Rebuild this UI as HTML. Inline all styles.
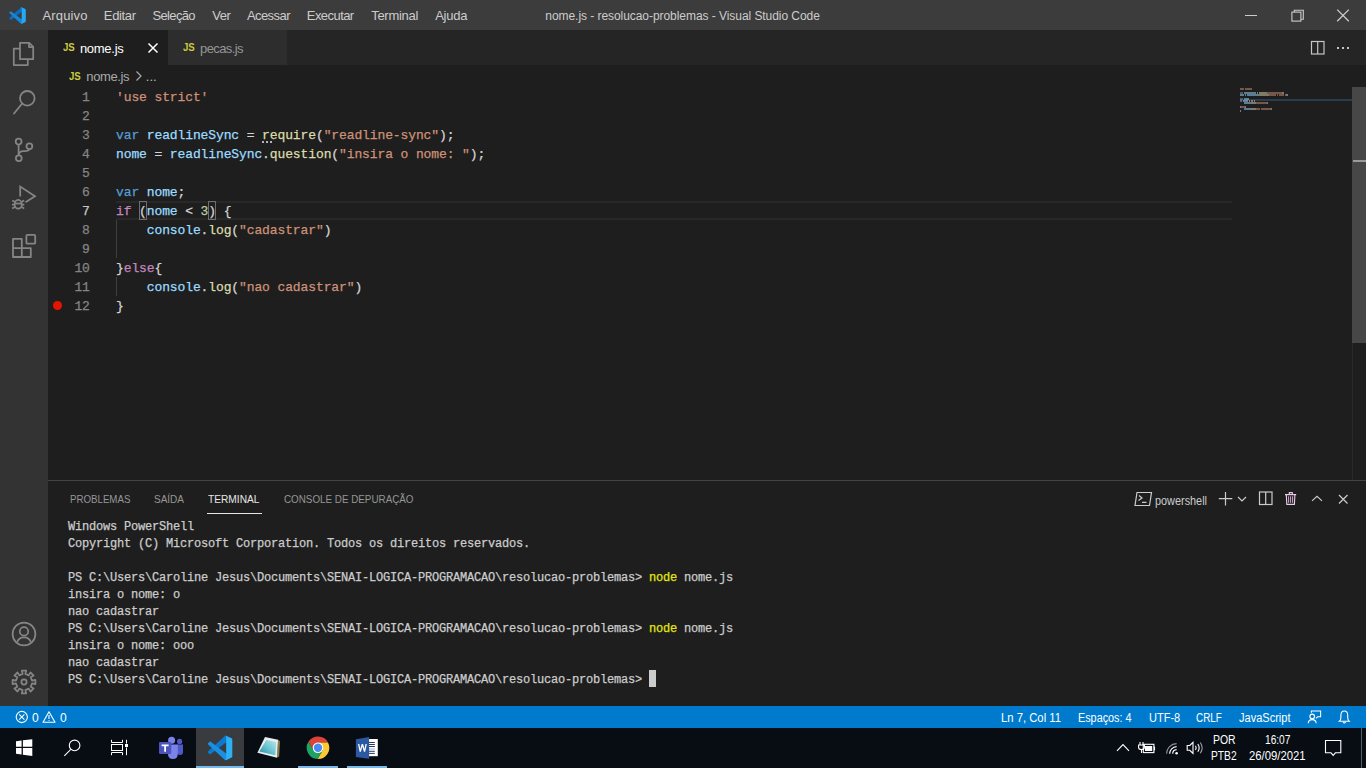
<!DOCTYPE html>
<html><head><meta charset="utf-8"><style>
html,body{margin:0;padding:0;}
body{width:1366px;height:768px;overflow:hidden;position:relative;background:#1e1e1e;font-family:'Liberation Sans', sans-serif;}
.t{position:absolute;white-space:pre;line-height:1;}
svg{position:absolute;overflow:visible;}
</style></head><body>
<div style="position:absolute;left:0px;top:0px;width:1366px;height:30px;background:#3c3c3c;"></div>
<div style="position:absolute;left:0px;top:30px;width:48px;height:676px;background:#333333;"></div>
<div style="position:absolute;left:48px;top:30px;width:1318px;height:35px;background:#252526;"></div>
<div style="position:absolute;left:48px;top:30px;width:120px;height:35px;background:#1e1e1e;"></div>
<div style="position:absolute;left:168px;top:30px;width:119px;height:35px;background:#2d2d2d;"></div>
<div style="position:absolute;left:48px;top:480px;width:1318px;height:1px;background:#444444;"></div>
<div style="position:absolute;left:0px;top:706px;width:1366px;height:22px;background:#007acc;"></div>
<div style="position:absolute;left:0px;top:728px;width:1366px;height:40px;background:#080d14;"></div>
<div style="position:absolute;left:649px;top:670px;width:7px;height:17px;background:#cccccc;"></div>
<div style="position:absolute;left:207px;top:513px;width:55px;height:1px;background:#e7e7e7;"></div>
<div style="position:absolute;left:116px;top:201px;width:1116px;height:2px;background:#282828;"></div>
<div style="position:absolute;left:116px;top:218px;width:1116px;height:2px;background:#282828;"></div>
<div style="position:absolute;left:139px;top:201px;width:6px;height:17px;border:1px solid #6e6e6e;box-sizing:content-box"></div>
<div style="position:absolute;left:208px;top:201px;width:6px;height:17px;border:1px solid #6e6e6e;box-sizing:content-box"></div>
<div style="position:absolute;left:116px;top:220px;width:1px;height:38px;background:#404040;"></div>
<div style="position:absolute;left:116px;top:277px;width:1px;height:19px;background:#404040;"></div>
<div style="position:absolute;left:53px;top:301px;width:9px;height:9px;border-radius:50%;background:#e51400"></div>
<div style="position:absolute;left:262px;top:141px;width:2px;height:2px;background:#b4b4b4;"></div>
<div style="position:absolute;left:266px;top:141px;width:2px;height:2px;background:#b4b4b4;"></div>
<div style="position:absolute;left:270px;top:141px;width:2px;height:2px;background:#b4b4b4;"></div>
<div style="position:absolute;left:1352px;top:87px;width:14px;height:256px;background:#474747;"></div>
<div style="position:absolute;left:1352px;top:343px;width:1px;height:137px;background:#2a2a2a;"></div>
<div style="position:absolute;left:1353px;top:160px;width:13px;height:2px;background:#9a9a9a;"></div>
<div style="position:absolute;left:1240px;top:99px;width:112px;height:2px;background:#2a3c4e;"></div>
<div style="position:absolute;left:1240px;top:88px;width:4px;height:2px;background:#ce9178;opacity:.5"></div>
<div style="position:absolute;left:1245px;top:88px;width:7px;height:2px;background:#ce9178;opacity:.5"></div>
<div style="position:absolute;left:1240px;top:92px;width:3px;height:2px;background:#569cd6;opacity:.5"></div>
<div style="position:absolute;left:1244px;top:92px;width:12px;height:2px;background:#9cdcfe;opacity:.5"></div>
<div style="position:absolute;left:1257px;top:92px;width:1px;height:2px;background:#d4d4d4;opacity:.5"></div>
<div style="position:absolute;left:1259px;top:92px;width:7px;height:2px;background:#dcdcaa;opacity:.5"></div>
<div style="position:absolute;left:1266px;top:92px;width:1px;height:2px;background:#d4d4d4;opacity:.5"></div>
<div style="position:absolute;left:1267px;top:92px;width:15px;height:2px;background:#ce9178;opacity:.5"></div>
<div style="position:absolute;left:1282px;top:92px;width:2px;height:2px;background:#d4d4d4;opacity:.5"></div>
<div style="position:absolute;left:1240px;top:94px;width:4px;height:2px;background:#9cdcfe;opacity:.5"></div>
<div style="position:absolute;left:1245px;top:94px;width:1px;height:2px;background:#d4d4d4;opacity:.5"></div>
<div style="position:absolute;left:1247px;top:94px;width:12px;height:2px;background:#9cdcfe;opacity:.5"></div>
<div style="position:absolute;left:1259px;top:94px;width:1px;height:2px;background:#d4d4d4;opacity:.5"></div>
<div style="position:absolute;left:1260px;top:94px;width:8px;height:2px;background:#dcdcaa;opacity:.5"></div>
<div style="position:absolute;left:1268px;top:94px;width:1px;height:2px;background:#d4d4d4;opacity:.5"></div>
<div style="position:absolute;left:1269px;top:94px;width:7px;height:2px;background:#ce9178;opacity:.5"></div>
<div style="position:absolute;left:1277px;top:94px;width:1px;height:2px;background:#ce9178;opacity:.5"></div>
<div style="position:absolute;left:1279px;top:94px;width:5px;height:2px;background:#ce9178;opacity:.5"></div>
<div style="position:absolute;left:1285px;top:94px;width:1px;height:2px;background:#ce9178;opacity:.5"></div>
<div style="position:absolute;left:1286px;top:94px;width:2px;height:2px;background:#d4d4d4;opacity:.5"></div>
<div style="position:absolute;left:1240px;top:98px;width:3px;height:2px;background:#569cd6;opacity:.5"></div>
<div style="position:absolute;left:1244px;top:98px;width:4px;height:2px;background:#9cdcfe;opacity:.5"></div>
<div style="position:absolute;left:1248px;top:98px;width:1px;height:2px;background:#d4d4d4;opacity:.5"></div>
<div style="position:absolute;left:1240px;top:100px;width:2px;height:2px;background:#c586c0;opacity:.5"></div>
<div style="position:absolute;left:1243px;top:100px;width:1px;height:2px;background:#d4d4d4;opacity:.5"></div>
<div style="position:absolute;left:1244px;top:100px;width:4px;height:2px;background:#9cdcfe;opacity:.5"></div>
<div style="position:absolute;left:1249px;top:100px;width:1px;height:2px;background:#d4d4d4;opacity:.5"></div>
<div style="position:absolute;left:1251px;top:100px;width:1px;height:2px;background:#b5cea8;opacity:.5"></div>
<div style="position:absolute;left:1252px;top:100px;width:1px;height:2px;background:#d4d4d4;opacity:.5"></div>
<div style="position:absolute;left:1254px;top:100px;width:1px;height:2px;background:#d4d4d4;opacity:.5"></div>
<div style="position:absolute;left:1244px;top:102px;width:7px;height:2px;background:#9cdcfe;opacity:.5"></div>
<div style="position:absolute;left:1251px;top:102px;width:1px;height:2px;background:#d4d4d4;opacity:.5"></div>
<div style="position:absolute;left:1252px;top:102px;width:3px;height:2px;background:#dcdcaa;opacity:.5"></div>
<div style="position:absolute;left:1255px;top:102px;width:1px;height:2px;background:#d4d4d4;opacity:.5"></div>
<div style="position:absolute;left:1256px;top:102px;width:11px;height:2px;background:#ce9178;opacity:.5"></div>
<div style="position:absolute;left:1267px;top:102px;width:1px;height:2px;background:#d4d4d4;opacity:.5"></div>
<div style="position:absolute;left:1240px;top:106px;width:1px;height:2px;background:#d4d4d4;opacity:.5"></div>
<div style="position:absolute;left:1241px;top:106px;width:4px;height:2px;background:#c586c0;opacity:.5"></div>
<div style="position:absolute;left:1245px;top:106px;width:1px;height:2px;background:#d4d4d4;opacity:.5"></div>
<div style="position:absolute;left:1244px;top:108px;width:7px;height:2px;background:#9cdcfe;opacity:.5"></div>
<div style="position:absolute;left:1251px;top:108px;width:1px;height:2px;background:#d4d4d4;opacity:.5"></div>
<div style="position:absolute;left:1252px;top:108px;width:3px;height:2px;background:#dcdcaa;opacity:.5"></div>
<div style="position:absolute;left:1255px;top:108px;width:1px;height:2px;background:#d4d4d4;opacity:.5"></div>
<div style="position:absolute;left:1256px;top:108px;width:4px;height:2px;background:#ce9178;opacity:.5"></div>
<div style="position:absolute;left:1261px;top:108px;width:10px;height:2px;background:#ce9178;opacity:.5"></div>
<div style="position:absolute;left:1271px;top:108px;width:1px;height:2px;background:#d4d4d4;opacity:.5"></div>
<div style="position:absolute;left:1240px;top:110px;width:1px;height:2px;background:#d4d4d4;opacity:.5"></div>
<svg style="left:0px;top:30px;" width="48" height="48" viewBox="0 0 48 48"><g fill="none" stroke="#858585" stroke-width="1.75" stroke-linejoin="round"><path d="M19.8 18.5 H13.8 V35 H27.8 V30"/><path d="M20 12.8 H29.2 L33.2 16.8 V29.2 H20 Z"/><path d="M29 13 V17 H33"/></g></svg>
<svg style="left:0px;top:78px;" width="48" height="48" viewBox="0 0 48 48"><g fill="none" stroke="#858585" stroke-width="1.8"><circle cx="27.3" cy="20.3" r="7.3"/><path d="M22 25.8 L14 35.5" stroke-linecap="round"/></g></svg>
<svg style="left:0px;top:126px;" width="48" height="48" viewBox="0 0 48 48"><g fill="none" stroke="#858585" stroke-width="1.75"><circle cx="18.6" cy="15.6" r="2.9"/><circle cx="29.4" cy="20.2" r="2.9"/><circle cx="18.8" cy="32.2" r="2.9"/><path d="M18.6 18.5 V29.3"/><path d="M18.8 28.5 Q19.5 25 23 25 H25.5 Q29.4 25 29.4 23.1"/></g></svg>
<svg style="left:0px;top:174px;" width="48" height="48" viewBox="0 0 48 48"><g fill="none" stroke="#858585" stroke-width="1.75" stroke-linejoin="miter"><path d="M20.2 22.5 V12.5 L35 22.2 L25.5 28.3"/><ellipse cx="18.2" cy="30.3" rx="3.6" ry="4.4"/><path d="M14.6 29.5 H21.8"/><path d="M12.2 26.5 L14.8 27.8 M24.2 26.5 L21.6 27.8 M12 30.5 H14.5 M24.3 30.5 H21.8 M12.2 34.5 L14.8 33 M24.2 34.5 L21.6 33"/></g></svg>
<svg style="left:0px;top:222px;" width="48" height="48" viewBox="0 0 48 48"><g fill="none" stroke="#858585" stroke-width="1.8" stroke-linejoin="round"><path d="M13 16.9 H21.8 V26.2 H30.8 V35 H13 Z"/><path d="M13 26.2 H21.8 V35"/><rect x="26.4" y="12.9" width="8.8" height="8.8" rx="1"/></g></svg>
<svg style="left:0px;top:610px;" width="48" height="48" viewBox="0 0 48 48"><g fill="none" stroke="#858585" stroke-width="1.75"><circle cx="24" cy="24" r="11.4"/><circle cx="24" cy="21.4" r="4.2"/><path d="M17 32.6 Q18.5 27.4 24 27.4 Q29.5 27.4 31 32.6"/></g></svg>
<svg style="left:0px;top:658px;" width="48" height="48" viewBox="0 0 48 48"><g fill="none" stroke="#858585" stroke-width="1.75" stroke-linejoin="round"><path d="M35.39 21.79 L35.39 26.21 L32.09 25.35 L30.68 28.76 L33.62 30.49 L30.49 33.62 L28.76 30.68 L25.35 32.09 L26.21 35.39 L21.79 35.39 L22.65 32.09 L19.24 30.68 L17.51 33.62 L14.38 30.49 L17.32 28.76 L15.91 25.35 L12.61 26.21 L12.61 21.79 L15.91 22.65 L17.32 19.24 L14.38 17.51 L17.51 14.38 L19.24 17.32 L22.65 15.91 L21.79 12.61 L26.21 12.61 L25.35 15.91 L28.76 17.32 L30.49 14.38 L33.62 17.51 L30.68 19.24 L32.09 22.65 Z"/><circle cx="24" cy="24" r="2.6"/></g></svg>
<svg style="left:9px;top:7px;" width="17" height="17" viewBox="0 0 17 17"><g transform="translate(0.3 0.3) scale(0.165)"><path fill="#0a6fc0" d="M96.46 10.8L75.86 0.88C73.47 -0.27 70.62 0.21 68.75 2.08L1.3 63.58C-0.52 65.24 -0.51 68.09 1.3 69.75L6.81 74.75C8.3 76.1 10.53 76.2 12.13 74.99L93.36 13.37C96.09 11.3 100 13.25 100 16.67V16.43C100 14.03 98.62 11.84 96.46 10.8Z"/><path fill="#1586d8" d="M96.46 89.2L75.86 99.12C73.47 100.27 70.62 99.79 68.75 97.92L1.3 36.42C-0.52 34.76 -0.51 31.91 1.3 30.25L6.81 25.25C8.3 23.9 10.53 23.8 12.13 25.01L93.36 86.63C96.09 88.7 100 86.75 100 83.33V83.57C100 85.97 98.62 88.16 96.46 89.2Z"/><path fill="#28a8f2" d="M75.86 99.13C73.47 100.27 70.62 99.79 68.75 97.92C71.06 100.22 75 98.59 75 95.33V4.67C75 1.41 71.06 -0.22 68.75 2.08C70.62 0.21 73.47 -0.27 75.86 0.87L96.46 10.78C98.62 11.82 100 14.01 100 16.41V83.59C100 85.99 98.62 88.18 96.46 89.22L75.86 99.13Z"/></g></svg>
<div style="position:absolute;left:1245px;top:15px;width:12px;height:1px;background:#cccccc;"></div>
<svg style="left:1236px;top:4px;" width="120" height="24" viewBox="0 0 120 24"><g fill="none" stroke="#cccccc" stroke-width="1.1"><rect x="55.9" y="8.1" width="9" height="9"/><path d="M58.3 8.1 V6.2 H67.3 V15.2 H64.9"/><path d="M101.2 5.6 L112.8 17.2 M112.8 5.6 L101.2 17.2" stroke-width="1.3"/></g></svg>
<svg style="left:140px;top:36px;" width="26" height="24" viewBox="0 0 26 24"><g fill="none" stroke="#ffffff" stroke-width="1.5"><path d="M8.5 7.5 L17.5 16.5 M17.5 7.5 L8.5 16.5"/></g></svg>
<svg style="left:130px;top:66px;" width="20" height="20" viewBox="0 0 20 20"><path d="M6.5 5.5 L11 10 L6.5 14.5" fill="none" stroke="#a9a9a9" stroke-width="1.2"/></svg>
<svg style="left:1305px;top:36px;" width="26" height="24" viewBox="0 0 26 24"><g fill="none" stroke="#c5c5c5" stroke-width="1.2"><rect x="6.5" y="5.5" width="12.5" height="12.5"/><path d="M12.7 5.5 V18"/></g></svg>
<div style="position:absolute;left:1337px;top:47px;width:2px;height:2px;background:#c5c5c5;"></div>
<div style="position:absolute;left:1342px;top:47px;width:2px;height:2px;background:#c5c5c5;"></div>
<div style="position:absolute;left:1347px;top:47px;width:2px;height:2px;background:#c5c5c5;"></div>
<svg style="left:1130px;top:486px;" width="130" height="26" viewBox="0 0 130 26"><g fill="none" stroke="#cccccc" stroke-width="1.2"><path d="M7 6.5 H21.5 L19.5 19.5 H5 Z"/><path d="M9 9.5 L12 12 L8.5 14.5 M12 16.3 H16.5"/><path d="M95.5 6 V19.5 M88.8 12.7 H102.3"/><path d="M108 11 L112 15 L116 11"/></g></svg>
<svg style="left:1250px;top:486px;" width="110" height="26" viewBox="0 0 110 26"><g fill="none" stroke="#cccccc" stroke-width="1.2"><rect x="9.5" y="6" width="12.5" height="12.5"/><path d="M15.7 6 V18.5"/><path d="M62 10.5 L67 15 L72 10.5" transform="rotate(180 67 12.7)"/><path d="M89 9 L97.5 17.5 M97.5 9 L89 17.5"/></g></svg>
<svg style="left:1280px;top:486px;" width="24" height="26" viewBox="0 0 24 26"><g fill="none" stroke="#e6cfe6" stroke-width="1.1"><path d="M5 8.6 H16.2 M9.3 8.6 V6.6 H12.3 V8.6 M6.3 8.6 L6.8 18.4 H14.4 L14.9 8.6"/><path d="M8.6 10.3 V16.8 M10.6 10.3 V16.8 M12.6 10.3 V16.8" stroke="#d9a6d9" stroke-width="1"/></g></svg>
<svg style="left:14px;top:710px;" width="60" height="16" viewBox="0 0 60 16"><g fill="none" stroke="#ffffff" stroke-width="1.1"><circle cx="7.8" cy="7" r="5.6"/><path d="M5.2 4.4 L10.4 9.6 M10.4 4.4 L5.2 9.6"/><path d="M35 1.8 L41 12.3 H29 Z" stroke-linejoin="round"/><path d="M35 5 V9 M35 10.2 V11"/></g></svg>
<svg style="left:1300px;top:708px;" width="60" height="18" viewBox="0 0 60 18"><g fill="none" stroke="#ffffff" stroke-width="1.1"><path d="M11.4 4.8 V3 H20.6 V8.8 H17.6 L15.9 10.4"/><circle cx="12.2" cy="8.4" r="2.3"/><path d="M8.2 15.2 Q8.6 11.6 12.2 11.6 Q15.8 11.6 16.2 15.2"/><path d="M39.4 13.2 Q40.9 11.9 40.9 9.5 V7.2 Q40.9 3 44.3 3 Q47.7 3 47.7 7.2 V9.5 Q47.7 11.9 49.2 13.2 Z"/><path d="M42.9 14.3 Q44.3 15.6 45.7 14.3"/></g></svg>
<div style="position:absolute;left:196px;top:728px;width:48px;height:40px;background:#3a3b3e;"></div>
<div style="position:absolute;left:196px;top:766px;width:48px;height:2px;background:#76b9ed;"></div>
<div style="position:absolute;left:298px;top:766px;width:40px;height:2px;background:#76b9ed;"></div>
<div style="position:absolute;left:347px;top:766px;width:40px;height:2px;background:#76b9ed;"></div>
<div style="position:absolute;left:1361px;top:728px;width:1px;height:40px;background:#5a5d62;"></div>
<svg style="left:14px;top:738px;" width="20" height="20" viewBox="0 0 20 20"><g fill="#ffffff"><path d="M2 3.3 L7.6 2.5 V8.8 H2 Z"/><path d="M8.9 2.3 L18.3 1.2 V8.8 H8.9 Z"/><path d="M2 10.1 H7.6 V16.5 L2 15.7 Z"/><path d="M8.9 10.1 H18.3 V17.9 L8.9 16.7 Z"/></g></svg>
<svg style="left:60px;top:736px;" width="24" height="24" viewBox="0 0 24 24"><g fill="none" stroke="#ffffff" stroke-width="1.1"><circle cx="14.6" cy="9.4" r="5.3"/><path d="M10.8 13.4 L4.3 19.8"/></g></svg>
<svg style="left:108px;top:736px;" width="24" height="24" viewBox="0 0 24 24"><g fill="none" stroke="#ffffff" stroke-width="1"><path d="M3.5 3.8 V6.5 H14.5 V3.8 M3.5 19.2 V16.5 H14.5 V19.2"/><rect x="3.5" y="8.5" width="11" height="6"/><path d="M18.5 3.8 V7.5 M18.5 11.5 V19.2"/></g></svg>
<div style="position:absolute;left:125px;top:744px;width:3px;height:3px;background:#ffffff;"></div>
<svg style="left:156px;top:734px;" width="30" height="26" viewBox="0 0 30 26"><g><circle cx="15.6" cy="6.2" r="3.5" fill="#7b83eb"/><circle cx="23.6" cy="7.4" r="2.6" fill="#5059c9"/><path d="M21 10.6 H27 V17.5 Q27 21 24 21 Q21.5 21 21 19 Z" fill="#5059c9"/><path d="M12 10.6 H21.8 V20 Q21.8 25 16.9 25 Q12 25 12 20 Z" fill="#7b83eb"/><rect x="3" y="8" width="12.2" height="11.9" rx="0.8" fill="#4b53bc"/><path d="M5.6 10.5 H12.6 V12.3 H10 V17.8 H8.2 V12.3 H5.6 Z" fill="#ffffff"/></g></svg>
<svg style="left:207px;top:735px;" width="26" height="26" viewBox="0 0 26 26"><g transform="translate(0.8 0.7) scale(0.245)"><path fill="#0a7ad0" d="M96.46 10.8L75.86 0.88C73.47 -0.27 70.62 0.21 68.75 2.08L1.3 63.58C-0.52 65.24 -0.51 68.09 1.3 69.75L6.81 74.75C8.3 76.1 10.53 76.2 12.13 74.99L93.36 13.37C96.09 11.3 100 13.25 100 16.67V16.43C100 14.03 98.62 11.84 96.46 10.8Z"/><path fill="#1a8fe3" d="M96.46 89.2L75.86 99.12C73.47 100.27 70.62 99.79 68.75 97.92L1.3 36.42C-0.52 34.76 -0.51 31.91 1.3 30.25L6.81 25.25C8.3 23.9 10.53 23.8 12.13 25.01L93.36 86.63C96.09 88.7 100 86.75 100 83.33V83.57C100 85.97 98.62 88.16 96.46 89.2Z"/><path fill="#2cb1f7" d="M75.86 99.13C73.47 100.27 70.62 99.79 68.75 97.92C71.06 100.22 75 98.59 75 95.33V4.67C75 1.41 71.06 -0.22 68.75 2.08C70.62 0.21 73.47 -0.27 75.86 0.87L96.46 10.78C98.62 11.82 100 14.01 100 16.41V83.59C100 85.99 98.62 88.18 96.46 89.22L75.86 99.13Z"/></g></svg>
<svg style="left:255px;top:735px;" width="26" height="26" viewBox="0 0 26 26"><defs><linearGradient id="np" x1="0" y1="1" x2="1" y2="0"><stop offset="0" stop-color="#1f8a99"/><stop offset=".5" stop-color="#6cc4d2"/><stop offset="1" stop-color="#bfe6ee"/></linearGradient></defs><g><path d="M23.1 4.8 L25 6.2 L24.2 21.5 L22 22.8 Z" fill="#8a7a4a"/><path d="M10 2.1 L23.1 4.8 L22 22.8 L2.4 17.7 Z" fill="#e6eef0"/><path d="M11.3 5 L21.2 7 L20.3 20.2 L4.3 16.4 Z" fill="url(#np)"/></g></svg>
<svg style="left:306px;top:736px;" width="24" height="24" viewBox="0 0 24 24"><g transform="translate(12 11.7)"><path d="M0 -5.3 L9.98 -5.3 A11.3 11.3 0 0 0 -9.58 -5.99 L-4.59 2.65 L0 0 Z" fill="#db4437"/><path d="M0 -5.3 L9.98 -5.3 A11.3 11.3 0 0 1 -0.4 11.3 L4.59 2.65 L0 0 Z" fill="#fcc934"/><path d="M4.59 2.65 L-0.4 11.3 A11.3 11.3 0 0 1 -9.58 -5.99 L-4.59 2.65 L0 0 Z" fill="#1ea362"/><circle r="5.3" fill="#ffffff"/><circle r="4.2" fill="#4a8af4"/></g></svg>
<svg style="left:354px;top:735px;" width="26" height="26" viewBox="0 0 26 26"><g><rect x="14.5" y="4" width="9.3" height="17.2" fill="#ffffff"/><path d="M15 7.5 H20.8 M15 9.5 H20.8 M15 11.5 H20.8 M15 16.3 H20.8 M15 18.4 H20.8" stroke="#2a3a5c" stroke-width="1"/><path d="M15 14 H20.8" stroke="#9fb2d6" stroke-width="1"/><path d="M1.9 4.2 L15.1 1.9 V23.8 L1.9 22 Z" fill="#2c58a2"/><path d="M4 9.1 L5.6 16.7 L6.9 16.7 L8.4 11.6 L9.9 16.7 L11.2 16.7 L12.8 9.1 L11.5 9.1 L10.5 14 L9.1 9.1 L7.7 9.1 L6.3 14 L5.3 9.1 Z" fill="#ffffff"/></g></svg>
<svg style="left:1110px;top:736px;" width="100" height="24" viewBox="0 0 100 24"><g fill="none" stroke="#ffffff" stroke-width="1.1"><path d="M7 14.8 L13 8.6 L19 14.8"/><path d="M30 6 V9 M33 6 V9 M28.6 9 H34.4 V11.5 Q34.4 13.5 31.5 13.5 Q28.6 13.5 28.6 11.5 Z M31.5 13.5 V17"/><rect x="33.3" y="8.3" width="10.6" height="8.3"/><path d="M44.5 10.5 V14.3"/></g><rect x="35" y="10" width="7.2" height="5" fill="#ffffff"/><g fill="none" stroke="#ffffff" stroke-width="1.1"><path d="M62.7 17.8 A4.2 4.2 0 0 1 66.6 13.6 M59.6 17.8 A7.2 7.2 0 0 1 66.6 10.6"/><path d="M56.6 17.8 A10.2 10.2 0 0 1 66.6 7.6" stroke-opacity=".55"/><path d="M77.2 9.5 H79.8 L83 6.3 V17.5 L79.8 14.3 H77.2 Z"/><path d="M85.5 9.8 Q86.8 11.9 85.5 14"/><path d="M87.8 8 Q90.5 11.9 87.8 15.8"/><path d="M90.3 6.5 Q94 11.9 90.3 17.3" stroke-opacity=".6"/></g><circle cx="66.6" cy="17.2" r="1.3" fill="#ffffff"/></svg>
<svg style="left:1320px;top:736px;" width="26" height="24" viewBox="0 0 26 24"><path d="M5.5 4.5 H20.8 V16.8 H15.4 L13.2 19.3 L11 16.8 H5.5 Z" fill="none" stroke="#ffffff" stroke-width="1.1"/></svg>
<div class="t" style="left:42.5px;top:7.80px;font:400 13px 'Liberation Sans', sans-serif;color:#cccccc;letter-spacing:0.137px;">Arquivo</div>
<div class="t" style="left:103.8px;top:7.80px;font:400 13px 'Liberation Sans', sans-serif;color:#cccccc;letter-spacing:-0.332px;">Editar</div>
<div class="t" style="left:152.5px;top:7.80px;font:400 13px 'Liberation Sans', sans-serif;color:#cccccc;letter-spacing:-0.647px;">Seleção</div>
<div class="t" style="left:212.2px;top:7.80px;font:400 13px 'Liberation Sans', sans-serif;color:#cccccc;letter-spacing:-0.456px;">Ver</div>
<div class="t" style="left:246.9px;top:7.80px;font:400 13px 'Liberation Sans', sans-serif;color:#cccccc;letter-spacing:-0.560px;">Acessar</div>
<div class="t" style="left:306.8px;top:7.80px;font:400 13px 'Liberation Sans', sans-serif;color:#cccccc;letter-spacing:-0.557px;">Executar</div>
<div class="t" style="left:371.2px;top:7.80px;font:400 13px 'Liberation Sans', sans-serif;color:#cccccc;letter-spacing:-0.289px;">Terminal</div>
<div class="t" style="left:435.2px;top:7.80px;font:400 13px 'Liberation Sans', sans-serif;color:#cccccc;letter-spacing:-0.262px;">Ajuda</div>
<div class="t" style="left:545.3px;top:9.04px;font:400 12px 'Liberation Sans', sans-serif;color:#cccccc;letter-spacing:-0.054px;">nome.js - resolucao-problemas - Visual Studio Code</div>
<div class="t" style="left:116px;top:89.84px;font:400 13px 'Liberation Mono', monospace;color:#ce9178;letter-spacing:-0.11px;-webkit-text-stroke:0.25px;">&#x27;use strict&#x27;</div>
<div class="t" style="left:116px;top:127.84px;font:400 13px 'Liberation Mono', monospace;color:#569cd6;letter-spacing:-0.11px;-webkit-text-stroke:0.25px;">var</div>
<div class="t" style="left:139.07px;top:127.84px;font:400 13px 'Liberation Mono', monospace;color:#d4d4d4;letter-spacing:-0.11px;-webkit-text-stroke:0.25px;"> </div>
<div class="t" style="left:146.76px;top:127.84px;font:400 13px 'Liberation Mono', monospace;color:#9cdcfe;letter-spacing:-0.11px;-webkit-text-stroke:0.25px;">readlineSync</div>
<div class="t" style="left:239.04px;top:127.84px;font:400 13px 'Liberation Mono', monospace;color:#d4d4d4;letter-spacing:-0.11px;-webkit-text-stroke:0.25px;"> = </div>
<div class="t" style="left:262.11px;top:127.84px;font:400 13px 'Liberation Mono', monospace;color:#dcdcaa;letter-spacing:-0.11px;-webkit-text-stroke:0.25px;">require</div>
<div class="t" style="left:315.94px;top:127.84px;font:400 13px 'Liberation Mono', monospace;color:#d4d4d4;letter-spacing:-0.11px;-webkit-text-stroke:0.25px;">(</div>
<div class="t" style="left:323.63px;top:127.84px;font:400 13px 'Liberation Mono', monospace;color:#ce9178;letter-spacing:-0.11px;-webkit-text-stroke:0.25px;">&quot;readline-sync&quot;</div>
<div class="t" style="left:438.98px;top:127.84px;font:400 13px 'Liberation Mono', monospace;color:#d4d4d4;letter-spacing:-0.11px;-webkit-text-stroke:0.25px;">);</div>
<div class="t" style="left:116px;top:146.84px;font:400 13px 'Liberation Mono', monospace;color:#9cdcfe;letter-spacing:-0.11px;-webkit-text-stroke:0.25px;">nome</div>
<div class="t" style="left:146.76px;top:146.84px;font:400 13px 'Liberation Mono', monospace;color:#d4d4d4;letter-spacing:-0.11px;-webkit-text-stroke:0.25px;"> = </div>
<div class="t" style="left:169.83px;top:146.84px;font:400 13px 'Liberation Mono', monospace;color:#9cdcfe;letter-spacing:-0.11px;-webkit-text-stroke:0.25px;">readlineSync</div>
<div class="t" style="left:262.11px;top:146.84px;font:400 13px 'Liberation Mono', monospace;color:#d4d4d4;letter-spacing:-0.11px;-webkit-text-stroke:0.25px;">.</div>
<div class="t" style="left:269.8px;top:146.84px;font:400 13px 'Liberation Mono', monospace;color:#dcdcaa;letter-spacing:-0.11px;-webkit-text-stroke:0.25px;">question</div>
<div class="t" style="left:331.32px;top:146.84px;font:400 13px 'Liberation Mono', monospace;color:#d4d4d4;letter-spacing:-0.11px;-webkit-text-stroke:0.25px;">(</div>
<div class="t" style="left:339.01px;top:146.84px;font:400 13px 'Liberation Mono', monospace;color:#ce9178;letter-spacing:-0.11px;-webkit-text-stroke:0.25px;">&quot;insira o nome: &quot;</div>
<div class="t" style="left:469.74px;top:146.84px;font:400 13px 'Liberation Mono', monospace;color:#d4d4d4;letter-spacing:-0.11px;-webkit-text-stroke:0.25px;">);</div>
<div class="t" style="left:116px;top:184.84px;font:400 13px 'Liberation Mono', monospace;color:#569cd6;letter-spacing:-0.11px;-webkit-text-stroke:0.25px;">var</div>
<div class="t" style="left:139.07px;top:184.84px;font:400 13px 'Liberation Mono', monospace;color:#d4d4d4;letter-spacing:-0.11px;-webkit-text-stroke:0.25px;"> </div>
<div class="t" style="left:146.76px;top:184.84px;font:400 13px 'Liberation Mono', monospace;color:#9cdcfe;letter-spacing:-0.11px;-webkit-text-stroke:0.25px;">nome</div>
<div class="t" style="left:177.52px;top:184.84px;font:400 13px 'Liberation Mono', monospace;color:#d4d4d4;letter-spacing:-0.11px;-webkit-text-stroke:0.25px;">;</div>
<div class="t" style="left:116px;top:203.84px;font:400 13px 'Liberation Mono', monospace;color:#c586c0;letter-spacing:-0.11px;-webkit-text-stroke:0.25px;">if</div>
<div class="t" style="left:131.38px;top:203.84px;font:400 13px 'Liberation Mono', monospace;color:#d4d4d4;letter-spacing:-0.11px;-webkit-text-stroke:0.25px;"> (</div>
<div class="t" style="left:146.76px;top:203.84px;font:400 13px 'Liberation Mono', monospace;color:#9cdcfe;letter-spacing:-0.11px;-webkit-text-stroke:0.25px;">nome</div>
<div class="t" style="left:177.52px;top:203.84px;font:400 13px 'Liberation Mono', monospace;color:#d4d4d4;letter-spacing:-0.11px;-webkit-text-stroke:0.25px;"> &lt; </div>
<div class="t" style="left:200.59px;top:203.84px;font:400 13px 'Liberation Mono', monospace;color:#b5cea8;letter-spacing:-0.11px;-webkit-text-stroke:0.25px;">3</div>
<div class="t" style="left:208.28px;top:203.84px;font:400 13px 'Liberation Mono', monospace;color:#d4d4d4;letter-spacing:-0.11px;-webkit-text-stroke:0.25px;">) {</div>
<div class="t" style="left:116px;top:222.84px;font:400 13px 'Liberation Mono', monospace;color:#d4d4d4;letter-spacing:-0.11px;-webkit-text-stroke:0.25px;">    </div>
<div class="t" style="left:146.76px;top:222.84px;font:400 13px 'Liberation Mono', monospace;color:#9cdcfe;letter-spacing:-0.11px;-webkit-text-stroke:0.25px;">console</div>
<div class="t" style="left:200.59px;top:222.84px;font:400 13px 'Liberation Mono', monospace;color:#d4d4d4;letter-spacing:-0.11px;-webkit-text-stroke:0.25px;">.</div>
<div class="t" style="left:208.28px;top:222.84px;font:400 13px 'Liberation Mono', monospace;color:#dcdcaa;letter-spacing:-0.11px;-webkit-text-stroke:0.25px;">log</div>
<div class="t" style="left:231.35px;top:222.84px;font:400 13px 'Liberation Mono', monospace;color:#d4d4d4;letter-spacing:-0.11px;-webkit-text-stroke:0.25px;">(</div>
<div class="t" style="left:239.04px;top:222.84px;font:400 13px 'Liberation Mono', monospace;color:#ce9178;letter-spacing:-0.11px;-webkit-text-stroke:0.25px;">&quot;cadastrar&quot;</div>
<div class="t" style="left:323.63px;top:222.84px;font:400 13px 'Liberation Mono', monospace;color:#d4d4d4;letter-spacing:-0.11px;-webkit-text-stroke:0.25px;">)</div>
<div class="t" style="left:116px;top:260.84px;font:400 13px 'Liberation Mono', monospace;color:#d4d4d4;letter-spacing:-0.11px;-webkit-text-stroke:0.25px;">}</div>
<div class="t" style="left:123.69px;top:260.84px;font:400 13px 'Liberation Mono', monospace;color:#c586c0;letter-spacing:-0.11px;-webkit-text-stroke:0.25px;">else</div>
<div class="t" style="left:154.45px;top:260.84px;font:400 13px 'Liberation Mono', monospace;color:#d4d4d4;letter-spacing:-0.11px;-webkit-text-stroke:0.25px;">{</div>
<div class="t" style="left:116px;top:279.84px;font:400 13px 'Liberation Mono', monospace;color:#d4d4d4;letter-spacing:-0.11px;-webkit-text-stroke:0.25px;">    </div>
<div class="t" style="left:146.76px;top:279.84px;font:400 13px 'Liberation Mono', monospace;color:#9cdcfe;letter-spacing:-0.11px;-webkit-text-stroke:0.25px;">console</div>
<div class="t" style="left:200.59px;top:279.84px;font:400 13px 'Liberation Mono', monospace;color:#d4d4d4;letter-spacing:-0.11px;-webkit-text-stroke:0.25px;">.</div>
<div class="t" style="left:208.28px;top:279.84px;font:400 13px 'Liberation Mono', monospace;color:#dcdcaa;letter-spacing:-0.11px;-webkit-text-stroke:0.25px;">log</div>
<div class="t" style="left:231.35px;top:279.84px;font:400 13px 'Liberation Mono', monospace;color:#d4d4d4;letter-spacing:-0.11px;-webkit-text-stroke:0.25px;">(</div>
<div class="t" style="left:239.04px;top:279.84px;font:400 13px 'Liberation Mono', monospace;color:#ce9178;letter-spacing:-0.11px;-webkit-text-stroke:0.25px;">&quot;nao cadastrar&quot;</div>
<div class="t" style="left:354.39px;top:279.84px;font:400 13px 'Liberation Mono', monospace;color:#d4d4d4;letter-spacing:-0.11px;-webkit-text-stroke:0.25px;">)</div>
<div class="t" style="left:116px;top:298.84px;font:400 13px 'Liberation Mono', monospace;color:#d4d4d4;letter-spacing:-0.11px;-webkit-text-stroke:0.25px;">}</div>
<div class="t" style="left:82.11px;top:89.84px;font:400 13px 'Liberation Mono', monospace;color:#858585;letter-spacing:-0.11px;-webkit-text-stroke:0.25px;">1</div>
<div class="t" style="left:82.11px;top:108.84px;font:400 13px 'Liberation Mono', monospace;color:#858585;letter-spacing:-0.11px;-webkit-text-stroke:0.25px;">2</div>
<div class="t" style="left:82.11px;top:127.84px;font:400 13px 'Liberation Mono', monospace;color:#858585;letter-spacing:-0.11px;-webkit-text-stroke:0.25px;">3</div>
<div class="t" style="left:82.11px;top:146.84px;font:400 13px 'Liberation Mono', monospace;color:#858585;letter-spacing:-0.11px;-webkit-text-stroke:0.25px;">4</div>
<div class="t" style="left:82.11px;top:165.84px;font:400 13px 'Liberation Mono', monospace;color:#858585;letter-spacing:-0.11px;-webkit-text-stroke:0.25px;">5</div>
<div class="t" style="left:82.11px;top:184.84px;font:400 13px 'Liberation Mono', monospace;color:#858585;letter-spacing:-0.11px;-webkit-text-stroke:0.25px;">6</div>
<div class="t" style="left:82.11px;top:203.84px;font:400 13px 'Liberation Mono', monospace;color:#c6c6c6;letter-spacing:-0.11px;-webkit-text-stroke:0.25px;">7</div>
<div class="t" style="left:82.11px;top:222.84px;font:400 13px 'Liberation Mono', monospace;color:#858585;letter-spacing:-0.11px;-webkit-text-stroke:0.25px;">8</div>
<div class="t" style="left:82.11px;top:241.84px;font:400 13px 'Liberation Mono', monospace;color:#858585;letter-spacing:-0.11px;-webkit-text-stroke:0.25px;">9</div>
<div class="t" style="left:74.42px;top:260.84px;font:400 13px 'Liberation Mono', monospace;color:#858585;letter-spacing:-0.11px;-webkit-text-stroke:0.25px;">10</div>
<div class="t" style="left:74.42px;top:279.84px;font:400 13px 'Liberation Mono', monospace;color:#858585;letter-spacing:-0.11px;-webkit-text-stroke:0.25px;">11</div>
<div class="t" style="left:74.42px;top:298.84px;font:400 13px 'Liberation Mono', monospace;color:#858585;letter-spacing:-0.11px;-webkit-text-stroke:0.25px;">12</div>
<div class="t" style="left:68px;top:519.61px;font:400 12px 'Liberation Mono', monospace;color:#cccccc;letter-spacing:-0.2px;-webkit-text-stroke:0.25px;">Windows PowerShell</div>
<div class="t" style="left:68px;top:536.61px;font:400 12px 'Liberation Mono', monospace;color:#cccccc;letter-spacing:-0.2px;-webkit-text-stroke:0.25px;">Copyright (C) Microsoft Corporation. Todos os direitos reservados.</div>
<div class="t" style="left:68px;top:570.61px;font:400 12px 'Liberation Mono', monospace;color:#cccccc;letter-spacing:-0.2px;-webkit-text-stroke:0.25px;">PS C:\Users\Caroline Jesus\Documents\SENAI-LOGICA-PROGRAMACAO\resolucao-problemas&gt; </div>
<div class="t" style="left:649.0px;top:570.61px;font:400 12px 'Liberation Mono', monospace;color:#e5e510;letter-spacing:-0.2px;-webkit-text-stroke:0.25px;">node</div>
<div class="t" style="left:677.0px;top:570.61px;font:400 12px 'Liberation Mono', monospace;color:#cccccc;letter-spacing:-0.2px;-webkit-text-stroke:0.25px;"> nome.js</div>
<div class="t" style="left:68px;top:587.61px;font:400 12px 'Liberation Mono', monospace;color:#cccccc;letter-spacing:-0.2px;-webkit-text-stroke:0.25px;">insira o nome: o</div>
<div class="t" style="left:68px;top:604.61px;font:400 12px 'Liberation Mono', monospace;color:#cccccc;letter-spacing:-0.2px;-webkit-text-stroke:0.25px;">nao cadastrar</div>
<div class="t" style="left:68px;top:621.61px;font:400 12px 'Liberation Mono', monospace;color:#cccccc;letter-spacing:-0.2px;-webkit-text-stroke:0.25px;">PS C:\Users\Caroline Jesus\Documents\SENAI-LOGICA-PROGRAMACAO\resolucao-problemas&gt; </div>
<div class="t" style="left:649.0px;top:621.61px;font:400 12px 'Liberation Mono', monospace;color:#e5e510;letter-spacing:-0.2px;-webkit-text-stroke:0.25px;">node</div>
<div class="t" style="left:677.0px;top:621.61px;font:400 12px 'Liberation Mono', monospace;color:#cccccc;letter-spacing:-0.2px;-webkit-text-stroke:0.25px;"> nome.js</div>
<div class="t" style="left:68px;top:638.61px;font:400 12px 'Liberation Mono', monospace;color:#cccccc;letter-spacing:-0.2px;-webkit-text-stroke:0.25px;">insira o nome: ooo</div>
<div class="t" style="left:68px;top:655.61px;font:400 12px 'Liberation Mono', monospace;color:#cccccc;letter-spacing:-0.2px;-webkit-text-stroke:0.25px;">nao cadastrar</div>
<div class="t" style="left:68px;top:672.61px;font:400 12px 'Liberation Mono', monospace;color:#cccccc;letter-spacing:-0.2px;-webkit-text-stroke:0.25px;">PS C:\Users\Caroline Jesus\Documents\SENAI-LOGICA-PROGRAMACAO\resolucao-problemas&gt; </div>
<div class="t" style="left:69.8px;top:492.59px;font:400 11px 'Liberation Sans', sans-serif;color:#969696;transform:scaleX(0.8822);transform-origin:0 0;">PROBLEMAS</div>
<div class="t" style="left:154.4px;top:492.59px;font:400 11px 'Liberation Sans', sans-serif;color:#969696;transform:scaleX(0.9088);transform-origin:0 0;">SAÍDA</div>
<div class="t" style="left:208.3px;top:492.59px;font:400 11px 'Liberation Sans', sans-serif;color:#e7e7e7;transform:scaleX(0.9260);transform-origin:0 0;">TERMINAL</div>
<div class="t" style="left:284.0px;top:492.59px;font:400 11px 'Liberation Sans', sans-serif;color:#969696;transform:scaleX(0.8939);transform-origin:0 0;">CONSOLE DE DEPURAÇÃO</div>
<div class="t" style="left:1001.1px;top:710.94px;font:400 12px 'Liberation Sans', sans-serif;color:#ffffff;transform:scaleX(0.9401);transform-origin:0 0;">Ln 7, Col 11</div>
<div class="t" style="left:1078.4px;top:710.94px;font:400 12px 'Liberation Sans', sans-serif;color:#ffffff;transform:scaleX(0.9012);transform-origin:0 0;">Espaços: 4</div>
<div class="t" style="left:1148.8px;top:710.94px;font:400 12px 'Liberation Sans', sans-serif;color:#ffffff;transform:scaleX(0.9178);transform-origin:0 0;">UTF-8</div>
<div class="t" style="left:1196.4px;top:710.94px;font:400 12px 'Liberation Sans', sans-serif;color:#ffffff;transform:scaleX(0.8233);transform-origin:0 0;">CRLF</div>
<div class="t" style="left:1238.8px;top:710.94px;font:400 12px 'Liberation Sans', sans-serif;color:#ffffff;transform:scaleX(0.9193);transform-origin:0 0;">JavaScript</div>
<div class="t" style="left:32px;top:710.94px;font:400 12px 'Liberation Sans', sans-serif;color:#ffffff;">0</div>
<div class="t" style="left:60px;top:710.94px;font:400 12px 'Liberation Sans', sans-serif;color:#ffffff;">0</div>
<div class="t" style="left:1213.0px;top:732.54px;font:400 12px 'Liberation Sans', sans-serif;color:#ffffff;transform:scaleX(0.8691);transform-origin:0 0;">POR</div>
<div class="t" style="left:1211.3px;top:749.24px;font:400 12px 'Liberation Sans', sans-serif;color:#ffffff;transform:scaleX(0.8530);transform-origin:0 0;">PTB2</div>
<div class="t" style="left:1264.6px;top:732.54px;font:400 12px 'Liberation Sans', sans-serif;color:#ffffff;transform:scaleX(0.8458);transform-origin:0 0;">16:07</div>
<div class="t" style="left:1248.7px;top:749.24px;font:400 12px 'Liberation Sans', sans-serif;color:#ffffff;transform:scaleX(0.9424);transform-origin:0 0;">26/09/2021</div>
<div class="t" style="left:79.9px;top:41.10px;font:400 13px 'Liberation Sans', sans-serif;color:#ffffff;letter-spacing:-0.270px;">nome.js</div>
<div class="t" style="left:200.0px;top:41.10px;font:400 13px 'Liberation Sans', sans-serif;color:#969696;letter-spacing:-0.599px;">pecas.js</div>
<div class="t" style="left:86.3px;top:68.90px;font:400 13px 'Liberation Sans', sans-serif;color:#a9a9a9;letter-spacing:-0.370px;">nome.js</div>
<div class="t" style="left:145.8px;top:68.90px;font:400 13px 'Liberation Sans', sans-serif;color:#bbbbbb;">...</div>
<div class="t" style="left:1155.0px;top:493.84px;font:400 12px 'Liberation Sans', sans-serif;color:#cccccc;transform:scaleX(0.9065);transform-origin:0 0;">powershell</div>
<div class="t" style="left:62.5px;top:40.69px;font:700 11px 'Liberation Sans', sans-serif;color:#cbcb41;transform:scaleX(0.8770);transform-origin:0 0;">JS</div>
<div class="t" style="left:182.5px;top:40.69px;font:700 11px 'Liberation Sans', sans-serif;color:#cbcb41;transform:scaleX(0.8770);transform-origin:0 0;">JS</div>
<div class="t" style="left:68.5px;top:69.69px;font:700 11px 'Liberation Sans', sans-serif;color:#cbcb41;transform:scaleX(0.8770);transform-origin:0 0;">JS</div>
</body></html>
